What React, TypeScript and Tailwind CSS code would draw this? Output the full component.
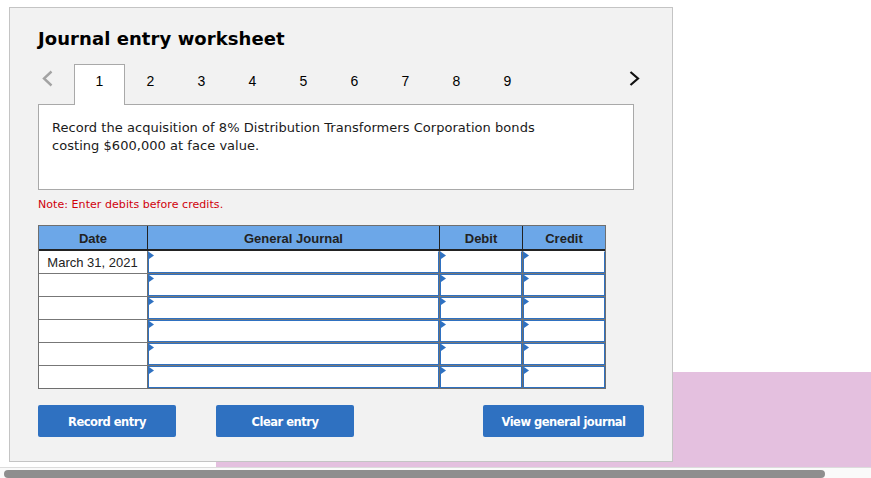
const rows = ["March 31, 2021", "", "", "", "", ""];
const tabs = [1, 2, 3, 4, 5, 6, 7, 8, 9];

function InputCell({ w, first }: { w: string; first: boolean }) {
  return (
    <div className={`${w} relative h-full border-l border-[#6f6f6f]`}>
      <div className={`h-full border border-[#2f71c1] bg-white ${first ? "border-t-white" : ""}`} />
      <svg className="absolute left-[1px] top-[1px]" width="5" height="7" viewBox="0 0 5 7">
        <path d="M0 0 L5 3.5 L0 7 Z" fill="#2f71c1" />
      </svg>
    </div>
  );
}

function Btn({ label, w }: { label: string; w: string }) {
  return (
    <button className={`${w} h-[32px] rounded-[2px] bg-[#2f71c1] pt-[1px] text-center text-[11.5px] font-bold leading-[32px] tracking-[-0.5px] text-white [font-family:'DejaVu_Sans',sans-serif]`}>
      {label}
    </button>
  );
}

export default function App() {
  return (
    <div className="relative h-[478px] w-[871px] overflow-hidden bg-white">
      <div className="absolute left-[216px] top-[372px] h-[96px] w-[655px] bg-[#e4c0df]" />
      <div className="relative ml-[9px] mt-[7px] h-[455px] w-[664px] border border-[#c4c4c4] bg-[#f2f2f2] pl-[28px] pt-[17px]">
        <h1 className="h-[27px] text-[18px] font-bold leading-[27px] text-black [font-family:'DejaVu_Sans',sans-serif] tracking-[0.07px]">
          Journal entry worksheet
        </h1>
        <div className="mt-[11px] flex h-[41px] w-[596px] items-start">
          <svg className="ml-[4px] mt-[7px]" width="11" height="17" viewBox="0 0 11 17">
            <path d="M9.5 1.5 L2 8.5 L9.5 15.5" fill="none" stroke="#a3a3a3" strokeWidth="2.4" />
          </svg>
          <div className="ml-[21px] flex">
            {tabs.map((t) => (
              <div
                key={t}
                className={
                  t === 1
                    ? "relative z-10 mt-[1px] h-[41px] w-[51px] border border-b-0 border-[#a9a9a9] bg-white text-center text-[14px] leading-[33px] text-black [font-family:'Liberation_Sans',sans-serif]"
                    : "h-[41px] w-[51px] text-center text-[14px] leading-[36px] text-black [font-family:'Liberation_Sans',sans-serif]"
                }
              >
                {t}
              </div>
            ))}
          </div>
          <svg className="ml-auto mt-[8px] mr-[-6px]" width="11" height="15" viewBox="0 0 11 15">
            <path d="M1.5 1 L9 7.5 L1.5 14" fill="none" stroke="#111" strokeWidth="2.2" />
          </svg>
        </div>
        <div className="h-[86px] w-[596px] border border-[#a9a9a9] bg-white pl-[13px] pt-[14px] text-[13px] leading-[18px] tracking-[0.04px] text-[#1a1a1a] [font-family:'DejaVu_Sans',sans-serif]">
          <p className="w-[500px]">Record the acquisition of 8% Distribution Transformers Corporation bonds costing $600,000 at face value.</p>
        </div>
        <p className="mt-[7px] h-[16px] text-[11px] leading-[16px] tracking-[0.06px] text-[#d0000b] [font-family:'DejaVu_Sans',sans-serif]">
          Note: Enter debits before credits.
        </p>
        <div className="mt-[12px] w-[568px] border border-[#6f6f6f] [font-family:'Liberation_Sans',sans-serif] text-[13px] text-[#222]">
          <div className="flex h-[25px] border-b-2 border-[#222] bg-[#6ca7e8] text-center font-bold leading-[25px]">
            <div className="w-[108px]">Date</div>
            <div className="w-[292px] border-l border-[#222]">General Journal</div>
            <div className="w-[83px] border-l border-[#222]">Debit</div>
            <div className="w-[83px] border-l border-[#222]">Credit</div>
          </div>
          {rows.map((r, i) => (
            <div key={i} className={`flex ${i ? "h-[23px] border-t border-[#777]" : "h-[22px]"} bg-white`}>
              <div className="w-[108px] pr-[1px] text-center leading-[23px]">{r}</div>
              <InputCell w="w-[292px]" first={i === 0} />
              <InputCell w="w-[83px]" first={i === 0} />
              <InputCell w="w-[83px]" first={i === 0} />
            </div>
          ))}
        </div>
        <div className="mt-[16px] flex w-[606px]">
          <Btn label="Record entry" w="w-[138px]" />
          <div className="ml-[40px]"><Btn label="Clear entry" w="w-[138px]" /></div>
          <div className="ml-auto"><Btn label="View general journal" w="w-[161px]" /></div>
        </div>
      </div>
      <div className="absolute bottom-0 left-0 h-[11px] w-full border-t border-[#dcdcdc] bg-[#fafafa]">
        <div className="ml-[4px] mt-[2px] h-[8px] w-[821px] rounded-[4px] bg-[#8e8e8e]" />
      </div>
    </div>
  );
}
